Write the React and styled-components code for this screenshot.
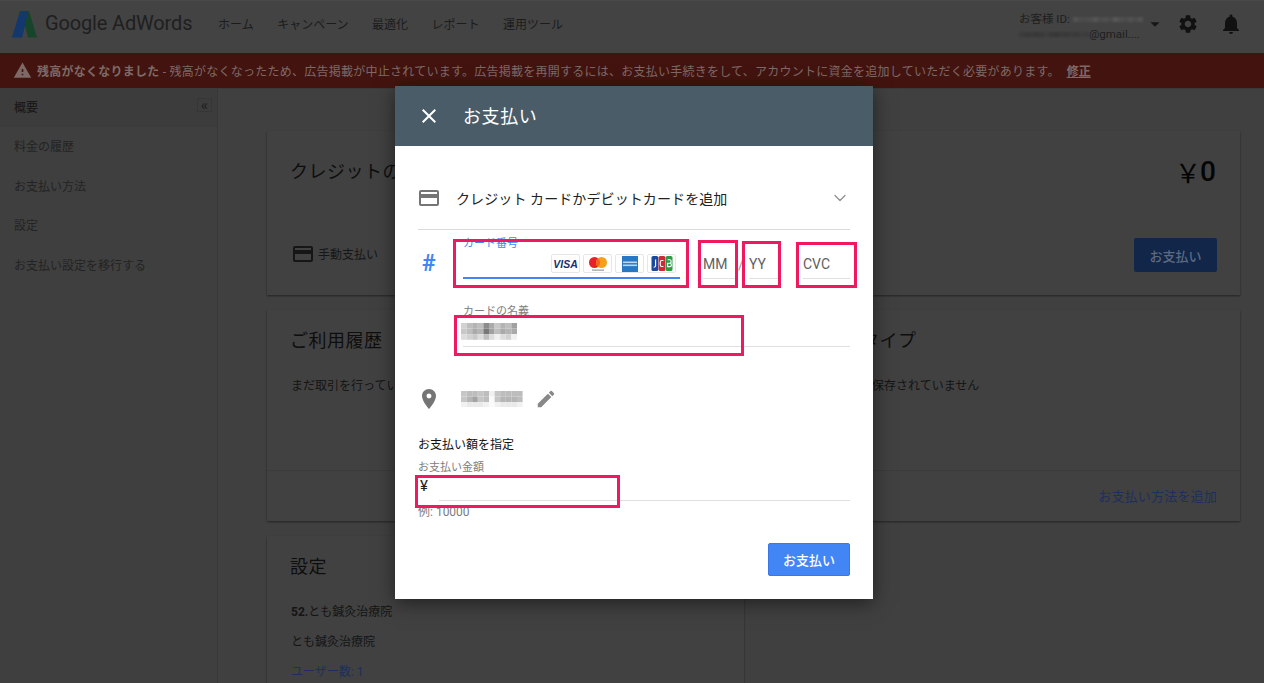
import React from 'react';
import styled, { createGlobalStyle } from 'styled-components';
import { MdCreditCard, MdClose, MdPlace, MdEdit, MdSettings, MdNotifications, MdWarning, MdArrowDropDown } from 'react-icons/md';
import { ChevronDown } from 'lucide-react';

const Global = createGlobalStyle`
  html, body { margin: 0; padding: 0; height: 683px; overflow: hidden; background: #404040; }
  body { font-family: Roboto, "Noto Sans CJK JP", sans-serif; color: #111; }
  * { box-sizing: border-box; }
`;

const Page = styled.div`
  position: relative;
  width: 1264px;
  height: 683px;
  overflow: hidden;
  background: #404040;
`;
const TopBar = styled.header`
  display: flex;
  align-items: center;
  height: 53px;
  padding: 0 21px 8px 11px;
  background: #434343;
  border-top: 1px solid #4a4a4a;
`;
const LogoMark = styled.svg`
  width: 27px;
  height: 27px;
  margin-top: 2px;
  flex: none;
`;
const Brand = styled.div`
  margin-left: 7px;
  width: 173px;
  font-size: 20px;
  letter-spacing: -0.15px;
  color: #1f1f1f;
  white-space: nowrap;
`;
const Nav = styled.nav`
  display: flex;
  gap: 23.5px;
  font-size: 12px;
  color: #1c1c1c;
`;
const Account = styled.div`
  margin-left: auto;
  margin-top: 8px;
  width: 123px;
  font-size: 11.5px;
  line-height: 15px;
  color: #1e1e1e;
`;
const AccountLine = styled.div`
  display: flex;
  align-items: center;
  height: 15px;
  white-space: nowrap;
`;
const TopIcons = styled.div`
  display: flex;
  align-items: center;
  margin-left: 2px;
  margin-top: 2px;
  color: #111;
`;
const TopIcon = styled.span`
  display: flex;
  margin-left: ${p => p.$ml || 0}px;
`;
const Banner = styled.div`
  display: flex;
  align-items: center;
  height: 35px;
  padding-left: 13px;
  background: #43140f;
  font-size: 12px;
  color: #7d6a67;
  white-space: nowrap;
  box-shadow: 0 1px 0 #3a3a3a;
`;
const BannerText = styled.span`
  margin-left: 5px;
  letter-spacing: 0.25px;
`;
const Strong = styled.b`
  font-weight: 700;
`;
const FixLink = styled.a`
  margin-left: 7px;
  font-weight: 700;
  text-decoration: underline;
`;
const Body = styled.div`
  display: flex;
  align-items: flex-start;
`;
const Sidebar = styled.aside`
  flex: none;
  width: 218px;
  height: 595px;
  background: #3f3f3f;
  border-right: 1px solid #383838;
  font-size: 12px;
  color: #232323;
`;
const SideHead = styled.div`
  display: flex;
  align-items: center;
  justify-content: space-between;
  height: 39px;
  padding: 0 5px 2px 14px;
  background: #3c3c3c;
  font-weight: 500;
  color: #1a1a1a;
`;
const Collapse = styled.span`
  display: flex;
  align-items: center;
  justify-content: center;
  width: 15px;
  height: 14px;
  margin-bottom: 3px;
  border: 1px solid #363636;
  font-size: 15px;
  line-height: 11px;
  color: #222;
`;
const SideItem = styled.div`
  display: flex;
  align-items: center;
  height: 39.5px;
  padding: 0 0 2.5px 14px;
`;
const Main = styled.main`
  flex: none;
  width: 1022px;
  padding: 43px 0 0 49px;
`;
const Card = styled.section`
  width: ${p => p.$w || 973}px;
  height: ${p => p.$h}px;
  margin-bottom: 15px;
  background: #414141;
  box-shadow: 0 1px 2px rgba(0,0,0,.45);
`;
const CardTop = styled.div`
  display: flex;
  justify-content: space-between;
  align-items: flex-start;
  padding: 25px 24px 0 24px;
  height: 82px;
`;
const Title = styled.h2`
  margin: 0 0 0 -1px;
  font-size: 18px;
  line-height: 32px;
  font-weight: 400;
  color: #0e0e0e;
  letter-spacing: 0.5px;
`;
const Amount = styled.div`
  display: flex;
  font-size: 28px;
  line-height: 32px;
  font-weight: 500;
  color: #050505;
`;
const AmountSign = styled.span`
  font-family: "Noto Sans CJK JP", sans-serif;
  font-weight: 400;
  font-size: 26px;
  margin-right: -1px;
`;
const CardRow = styled.div`
  display: flex;
  align-items: center;
  justify-content: space-between;
  padding: 25px 23px 0 24px;
`;
const Manual = styled.div`
  display: flex;
  align-items: center;
  gap: 3px;
  padding-bottom: 3px;
  font-size: 12px;
  color: #161616;
`;
const PageButton = styled.div`
  display: flex;
  align-items: center;
  justify-content: center;
  width: 83px;
  height: 34px;
  border-radius: 2px;
  background: #12264a;
  font-size: 13px;
  font-weight: 500;
  color: #5d6a80;
`;
const Columns = styled.div`
  display: grid;
  grid-template-columns: 497px 1fr;
  height: 161px;
  padding: 15px 24px 0;
  border-bottom: 1px solid #3b3b3b;
`;
const BodyText = styled.p`
  margin: ${p => p.$mt || 0}px 0 0;
  font-size: 12px;
  line-height: 16px;
  color: ${p => p.$link ? '#1c2f5c' : '#141414'};
`;
const CardFoot = styled.div`
  display: flex;
  justify-content: flex-end;
  align-items: center;
  height: 49px;
  padding-right: 23px;
  font-size: 13px;
  letter-spacing: 0.2px;
  color: #1c2f5e;
`;
const SettingsHead = styled.div`
  padding: 15px 24px 0;
`;
const SettingsBody = styled.div`
  padding: 21px 24px 0;
`;

const Modal = styled.div`
  position: absolute;
  left: 395px;
  top: 86px;
  width: 478px;
  height: 513px;
  background: #fff;
  box-shadow: 0 4px 18px rgba(0,0,0,.5);
`;
const ModalHead = styled.div`
  display: flex;
  align-items: center;
  height: 60px;
  padding: 0 0 1px 22px;
  background: #4a5c67;
  color: #fff;
  font-size: 18px;
  letter-spacing: 0.6px;
`;
const ModalTitle = styled.span`
  margin: 0 0 2px 22px;
`;
const ModalBody = styled.div`
  padding: 0 23px;
`;
const AddRow = styled.div`
  display: flex;
  align-items: center;
  padding: 40px 0 19px;
  border-bottom: 1px solid #dcdcdc;
  font-size: 14px;
  letter-spacing: 0.1px;
  color: #222;
`;
const IconSlot = styled.span`
  display: flex;
  flex: none;
  align-items: center;
  width: ${p => p.$w || 44}px;
  margin-left: -1px;
  color: #757575;
`;
const Chevron = styled.span`
  display: flex;
  margin-left: auto;
  color: #8f8f8f;
`;
const CardFields = styled.div`
  display: flex;
  align-items: flex-end;
  height: 42px;
  margin-top: 7px;
`;
const Hash = styled.span`
  flex: none;
  width: 45px;
  height: 42px;
  padding: 15px 0 0 4px;
  font-size: 23px;
  line-height: 24px;
  font-weight: 700;
  color: #4285f4;
`;
const NumberField = styled.div`
  flex: none;
  width: 217px;
  height: 42px;
  padding-top: 1px;
  border-bottom: 2px solid #4285f4;
`;
const FloatLabel = styled.div`
  font-size: 11px;
  line-height: 12px;
  color: ${p => p.$active ? '#4285f4' : '#7d7d7d'};
`;
const Brands = styled.div`
  display: flex;
  justify-content: flex-end;
  gap: 3px;
  margin-top: 4px;
  padding-right: 4px;
`;
const Tile = styled.span`
  display: flex;
  align-items: center;
  justify-content: center;
  width: 29px;
  height: 19px;
  border: 1px solid #e6e6e6;
  border-radius: 2px;
  background: #fff;
`;
const VisaWord = styled.span`
  font-family: "Liberation Sans", sans-serif;
  font-size: 10.5px;
  font-weight: 700;
  font-style: italic;
  color: #1a2f72;
`;
const SmallField = styled.div`
  flex: none;
  width: ${p => p.$w}px;
  margin-left: ${p => p.$ml || 0}px;
  padding-bottom: 6px;
  border-bottom: 1px solid #e0e0e0;
  font-size: 14px;
  line-height: 16px;
  color: #5f5f5f;
`;
const Slash = styled.span`
  flex: none;
  width: 13px;
  padding: 0 0 6px 2px;
  font-size: 14px;
  line-height: 16px;
  color: #999;
`;
const NameField = styled.div`
  margin: 27px 0 0 45px;
  padding-bottom: 7px;
  border-bottom: 1px solid #e0e0e0;
`;
const NameValue = styled.div`
  display: flex;
  height: 16px;
  margin: 5px 0 0 -2px;
`;
const AddressRow = styled.div`
  display: flex;
  align-items: center;
  height: 24px;
  margin-top: 40px;
`;
const PencilSlot = styled.span`
  display: flex;
  margin-left: 12px;
  color: #888;
`;
const Section = styled.div`
  margin-top: 26px;
  font-size: 12px;
  line-height: 16px;
  font-weight: 400;
  color: #111;
`;
const AmountLabel = styled.div`
  margin-top: 9px;
  font-size: 11px;
  line-height: 12px;
  color: #7d7d7d;
`;
const AmountRow = styled.div`
  display: flex;
  height: 27px;
`;
const Yen = styled.span`
  flex: none;
  width: 21px;
  padding: 4px 0 0 2px;
  font-size: 15px;
  line-height: 16px;
  color: #222;
`;
const AmountInput = styled.div`
  flex: 1;
  border-bottom: 1px solid #e0e0e0;
`;
const HintText = styled.div`
  margin-top: 4px;
  font-size: 12px;
  line-height: 14px;
  color: #7d7d7d;
`;
const Actions = styled.div`
  display: flex;
  justify-content: flex-end;
  margin-top: 24px;
`;
const PayButton = styled.div`
  display: flex;
  align-items: center;
  justify-content: center;
  width: 82px;
  height: 33px;
  padding-bottom: 1px;
  border: 1px solid #3b78e7;
  border-radius: 2px;
  background: #4285f4;
  color: #fff;
  font-size: 13px;
  font-weight: 500;
`;
const Mark = styled.div`
  position: absolute;
  left: ${p => p.$x - 395}px;
  top: ${p => p.$y - 86}px;
  width: ${p => p.$w}px;
  height: ${p => p.$h}px;
  border: 3px solid #f0185f;
  pointer-events: none;
`;
const MosaicSvg = styled.svg`
  display: block;
  flex: none;
  filter: blur(${p => p.$blur || 0.6}px);
`;

function Mosaic({ rows, cell = 6, dark = 0, light = 255, blur }) {
  const w = rows[0].length * cell;
  const h = rows.length * cell;
  return (
    <MosaicSvg $blur={blur} width={w} height={h} viewBox={`0 0 ${w} ${h}`}>
      {rows.flatMap((row, y) =>
        row.split('').map((c, x) => {
          const t = parseInt(c, 16) / 15;
          const v = Math.round(light - (light - dark) * t);
          return <rect key={`${x}-${y}`} x={x * cell} y={y * cell} width={cell} height={cell} fill={`rgb(${v},${v},${v})`} />;
        })
      )}
    </MosaicSvg>
  );
}

const Logo = () => (
  <LogoMark viewBox="0 0 27 27">
    <path d="M9 0h9l-7 26.5H1z" fill="#13386e" />
    <path d="M18 0l8 26.5h-9L13.5 13z" fill="#17452a" />
  </LogoMark>
);

const MasterCard = () => (
  <svg width="24" height="16" viewBox="0 0 24 16">
    <circle cx="8.5" cy="6.5" r="5.5" fill="#e8202a" />
    <circle cx="15.5" cy="6.5" r="5.5" fill="#f79e1b" />
    <path d="M12 2.2a5.5 5.5 0 0 1 0 8.6a5.5 5.5 0 0 1 0-8.6z" fill="#f2641f" />
    <rect x="6" y="13.5" width="12" height="1.2" fill="#999" />
  </svg>
);
const Amex = () => (
  <svg width="16" height="16" viewBox="0 0 16 16">
    <rect width="16" height="16" fill="#2a78c2" />
    <rect x="1" y="5.5" width="14" height="1.6" fill="#bcd8f2" />
    <rect x="1" y="8.5" width="14" height="1.6" fill="#bcd8f2" />
  </svg>
);
const Jcb = () => (
  <svg width="22" height="15" viewBox="0 0 22 15">
    <rect x="0.5" width="6.8" height="15" rx="1.6" fill="#1b4a9c" />
    <rect x="7.6" width="6.8" height="15" rx="1.6" fill="#cf2a36" />
    <rect x="14.7" width="6.8" height="15" rx="1.6" fill="#2c9a47" />
    <path d="M4.6 3.5v6.2q0 1.6-2 1.6M12.4 4.5h-2q-1.2 0-1.2 3t1.2 3h2M16.6 3.8h2.2q1.4 0 1.4 1.6t-1.4 1.8h-2.2m0 0h2.4q1.4 0 1.4 1.7t-1.4 1.7h-2.4z" stroke="#fff" strokeWidth="1.1" fill="none" />
  </svg>
);

export default function App() {
  return (
    <Page>
      <Global />
      <TopBar>
        <Logo />
        <Brand>Google AdWords</Brand>
        <Nav>
          <span>ホーム</span>
          <span>キャンペーン</span>
          <span>最適化</span>
          <span>レポート</span>
          <span>運用ツール</span>
        </Nav>
        <Account>
          <AccountLine>
            お客様 ID:&nbsp;
            <Mosaic cell={5} dark={0x42} light={0x5c} blur={1} rows={['59a8497a379695']} />
          </AccountLine>
          <AccountLine>
            <Mosaic cell={5} dark={0x30} light={0x4a} blur={1} rows={['8a9b97ab9a8978']} />
            @gmail....
          </AccountLine>
        </Account>
        <TopIcons>
          <MdArrowDropDown size={22} color="#161616" />
          <TopIcon $ml={11}><MdSettings size={22} /></TopIcon>
          <TopIcon $ml={20}><MdNotifications size={24} /></TopIcon>
        </TopIcons>
      </TopBar>
      <Banner>
        <MdWarning size={19} color="#7d6a67" />
        <BannerText>
          <Strong>残高がなくなりました</Strong> - 残高がなくなったため、広告掲載が中止されています。広告掲載を再開するには、お支払い手続きをして、アカウントに資金を追加していただく必要があります。
        </BannerText>
        <FixLink>修正</FixLink>
      </Banner>
      <Body>
        <Sidebar>
          <SideHead>概要<Collapse>«</Collapse></SideHead>
          <SideItem>料金の履歴</SideItem>
          <SideItem>お支払い方法</SideItem>
          <SideItem>設定</SideItem>
          <SideItem>お支払い設定を移行する</SideItem>
        </Sidebar>
        <Main>
          <Card $h={164}>
            <CardTop>
              <Title>クレジットの残高</Title>
              <Amount><AmountSign>{'\uFFE5'}</AmountSign>0</Amount>
            </CardTop>
            <CardRow>
              <Manual><MdCreditCard size={24} color="#161616" />手動支払い</Manual>
              <PageButton>お支払い</PageButton>
            </CardRow>
          </Card>
          <Card $h={211}>
            <Columns>
              <div>
                <Title>ご利用履歴</Title>
                <BodyText $mt={21}>まだ取引を行っていません</BodyText>
              </div>
              <div>
                <Title>お支払いタイプ</Title>
                <BodyText $mt={21}>お支払い方法が保存されていません</BodyText>
              </div>
            </Columns>
            <CardFoot>お支払い方法を追加</CardFoot>
          </Card>
          <Card $w={477} $h={200}>
            <SettingsHead>
              <Title>設定</Title>
            </SettingsHead>
            <SettingsBody>
              <BodyText><Strong>52.</Strong>とも鍼灸治療院</BodyText>
              <BodyText $mt={14}>とも鍼灸治療院</BodyText>
              <BodyText $mt={14} $link>ユーザー数: 1</BodyText>
            </SettingsBody>
          </Card>
        </Main>
      </Body>

      <Modal>
        <ModalHead>
          <MdClose size={24} />
          <ModalTitle>お支払い</ModalTitle>
        </ModalHead>
        <ModalBody>
          <AddRow>
            <IconSlot $w={39}><MdCreditCard size={24} /></IconSlot>
            <span>クレジット カードかデビットカードを追加</span>
            <Chevron><ChevronDown size={20} strokeWidth={1.5} /></Chevron>
          </AddRow>
          <CardFields>
            <Hash>#</Hash>
            <NumberField>
              <FloatLabel $active>カード番号</FloatLabel>
              <Brands>
                <Tile><VisaWord>VISA</VisaWord></Tile>
                <Tile><MasterCard /></Tile>
                <Tile><Amex /></Tile>
                <Tile><Jcb /></Tile>
              </Brands>
            </NumberField>
            <SmallField $w={33} $ml={23}>MM</SmallField>
            <Slash>/</Slash>
            <SmallField $w={29}>YY</SmallField>
            <SmallField $w={47} $ml={25}>CVC</SmallField>
          </CardFields>
          <NameField>
            <FloatLabel>カードの名義</FloatLabel>
            <NameValue>
              <Mosaic cell={5.6} dark={90} light={240} rows={['3565a74658', '4576c85767', '2342520230']} />
            </NameValue>
          </NameField>
          <AddressRow>
            <IconSlot><MdPlace size={24} /></IconSlot>
            <Mosaic cell={5.6} dark={120} light={250} rows={['67767167777', '68a67068887', '12221012221']} />
            <PencilSlot><MdEdit size={22} /></PencilSlot>
          </AddressRow>
          <Section>お支払い額を指定</Section>
          <AmountLabel>お支払い金額</AmountLabel>
          <AmountRow>
            <Yen>¥</Yen>
            <AmountInput />
          </AmountRow>
          <HintText>例: 10000</HintText>
          <Actions><PayButton>お支払い</PayButton></Actions>
        </ModalBody>
        <Mark $x={453} $y={239} $w={236} $h={49} />
        <Mark $x={698} $y={240} $w={40} $h={48} />
        <Mark $x={742} $y={241} $w={39} $h={47} />
        <Mark $x={796} $y={242} $w={61} $h={46} />
        <Mark $x={454} $y={315} $w={290} $h={41} />
        <Mark $x={415} $y={475} $w={205} $h={33} />
      </Modal>
    </Page>
  );
}
